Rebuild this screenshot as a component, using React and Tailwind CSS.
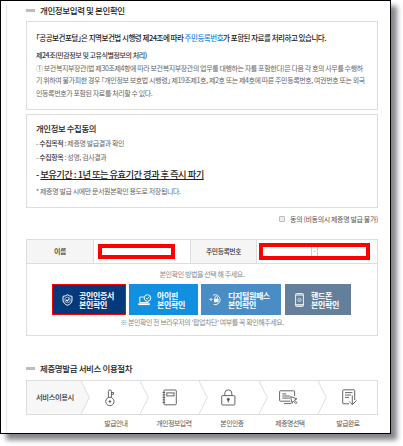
import React from "react";

function Heading({ children }) {
  return (
    <div className="flex h-[12px] items-center gap-[5px]">
      <span className="h-[3px] w-[9px] bg-[#bdbdbd]" />
      <h2 className="text-[8.5px] leading-[12px] font-medium text-[#222]">{children}</h2>
    </div>
  );
}

function ShieldIcon() {
  return (
    <svg className="h-[12px] w-[11px] shrink-0" viewBox="0 0 11 12" fill="none" stroke="#fff">
      <path d="M5.500 .7C4.300 1.700 2.800 2.200 1 2.300V6c0 2.600 2 4.300 4.500 5.300C8 10.300 10 8.600 10 6V2.300C8.200 2.200 6.700 1.700 5.500 .7Z" strokeWidth="1" />
      <circle cx="5.500" cy="5.900" r="2.800" strokeWidth=".6" />
      <path d="M4 5.700 5.200 7 7.300 4.600" strokeWidth="1.100" />
    </svg>
  );
}

function IpinIcon() {
  return (
    <svg className="h-[12px] w-[14px] shrink-0" viewBox="0 0 14 12" fill="none" stroke="#fff" strokeWidth=".9">
      <path d="M6 3H1.800v5.500h8.400V7.500" />
      <path d="M.3 10.200h11.500" strokeWidth="1.800" />
      <circle cx="9.500" cy="4" r="3.300" fill="#1190df" />
      <path d="m8 4 1.200 1.200L11.500 2.500" />
    </svg>
  );
}

function OnePassIcon() {
  return (
    <svg className="h-[13px] w-[13px] shrink-0" viewBox="0 0 13 13" fill="none" stroke="#fff">
      <path d="M2 8V6M4 2.200A5 5 0 1 1 4.600 11.500" strokeWidth=".9" />
      <path d="M.4 7 2 5.200 3.600 7" strokeWidth=".8" />
      <rect x="5" y="5.800" width="4.500" height="3.500" fill="#fff" stroke="none" />
      <path d="M5.900 6V4.700a1.350 1.350 0 0 1 2.700 0V6" strokeWidth=".8" />
    </svg>
  );
}

function PhoneIcon() {
  return (
    <svg className="h-[14px] w-[9px] shrink-0" viewBox="0 0 9 14" fill="none" stroke="#fff">
      <rect x=".6" y=".6" width="7.800" height="12.800" rx=".8" strokeWidth=".9" />
      <path d="M.6 2h7.800M.6 11.900h7.800" strokeWidth="1.200" />
      <circle cx="4.500" cy="6.900" r="1.700" strokeWidth=".6" />
      <path d="m3.700 6.900.7.700 1.100-1.300" strokeWidth=".6" />
    </svg>
  );
}

function ThermoIcon() {
  return (
    <svg className="h-[18px] w-[12px]" viewBox="0 0 12 18" fill="none" stroke="#555" strokeWidth=".9">
      <path d="M4.400 8.500V2.400a1.500 1.500 0 0 1 3 0v6.100" />
      <circle cx="5.900" cy="12.500" r="4.200" />
      <circle cx="5.900" cy="12.500" r=".8" fill="#555" />
      <path d="M7.400 3.500H9.500v1.800H7.400" />
    </svg>
  );
}

function NoteIcon() {
  return (
    <svg className="h-[17px] w-[15px]" viewBox="0 0 15 17" fill="none" stroke="#555" strokeWidth=".9">
      <rect x="2" y="1" width="12.300" height="14.800" rx=".9" />
      <path d="M.5 3.400h2.600M.5 5.900h2.600M.5 8.400h2.600M.5 10.900h2.600M.5 13.400h2.600" strokeWidth="1" />
      <rect x="4.800" y="3.900" width="7.200" height="3" />
    </svg>
  );
}

function LockIcon() {
  return (
    <svg className="h-[17px] w-[15px]" viewBox="0 0 15 17" fill="none" stroke="#555" strokeWidth=".9">
      <rect x=".7" y="6.600" width="13.200" height="9.400" rx="1" />
      <path d="M3.800 6.600V4.300a3.500 3.500 0 0 1 7 0v2.300" />
      <circle cx="7.300" cy="10.400" r="1.100" fill="#555" />
      <path d="M7.300 11v2.600" />
    </svg>
  );
}

function SelectIcon() {
  return (
    <svg className="h-[15px] w-[19px]" viewBox="0 0 19 15" fill="none" stroke="#555" strokeWidth=".9">
      <path d="M15.600 6V1.600a.8.800 0 0 0-.8-.8H1.400a.8.800 0 0 0-.8.800v8.800a.8.800 0 0 0 .8.800h10" />
      <path d="M3.300 3.900h4M3.300 6h7.500M3.300 8.100h7.500M5 13.600h7" />
      <path d="m11.600 6.600 6.300 2.200-2.500 1.200 2.500 2.600-1.100 1-2.500-2.500-1.200 2.200Z" fill="#fff" />
    </svg>
  );
}

function DoneIcon() {
  return (
    <svg className="h-[17px] w-[15px]" viewBox="0 0 15 17" fill="none" stroke="#555" strokeWidth=".9">
      <path d="M12.700 11V1.600a.8.800 0 0 0-.8-.8H1.500a.8.800 0 0 0-.8.800v12.400a.8.800 0 0 0 .8.800h5.500" />
      <path d="M3 3.600h7.500M3 6h6M3 8.400h4" />
      <path d="M10.300 6.500v9M7.200 12.500l3.100 3.200 4.200-4.200" />
    </svg>
  );
}

function Chevron({ fill }) {
  return (
    <svg className="h-[33px] w-[9px] shrink-0" viewBox="0 0 9 33" stroke="#ddd" strokeWidth="1">
      <path d="M0 0 8.300 16.500 0 33" fill={fill} />
    </svg>
  );
}

const methods = [
  { box: "w-[74px] border border-[#f00] bg-[#043a7c] pl-[9px] gap-[6px]", icon: <ShieldIcon />, name: "공인인증서" },
  { box: "ml-[3px] w-[69px] bg-[#1190df] pl-[9px] gap-[5px]", icon: <IpinIcon />, name: "아이핀" },
  { box: "ml-[3px] w-[80px] bg-[#4a8cc4] pl-[8px] gap-[6px]", icon: <OnePassIcon />, name: "디지털원패스" },
  { box: "ml-[4px] w-[66px] bg-[#637f9b] pl-[10px] gap-[7px]", icon: <PhoneIcon />, name: "핸드폰" },
];

const steps = [
  { icon: <ThermoIcon />, label: "발급안내", pad: "pr-[10px]" },
  { icon: <NoteIcon />, label: "개인정보입력", pad: "pr-[10px]" },
  { icon: <LockIcon />, label: "본인인증", pad: "pr-[10px]" },
  { icon: <SelectIcon />, label: "제증명선택", pad: "pr-[8px]" },
  { icon: <DoneIcon />, label: "발급완료", pad: "pr-[4px]" },
];

export default function App() {
  return (
    <div className="h-[446px] w-[403px] overflow-hidden bg-white font-['Noto_Sans_CJK_KR',sans-serif] tracking-[-0.39px] text-[#666]">
      <div className="h-[434px] w-[391px] border border-black bg-white pt-[3px] pl-[5px] shadow-[6px_6px_5px_#85858c]">
        <div className="h-[427px] w-[373px] border-l border-[#e8e8e8] pl-[19px] whitespace-nowrap">
          <Heading>개인정보입력 및 본인확인</Heading>

          <section className="mt-[5px] h-[89px] w-[352px] border border-[#ddd] pt-[9px] pl-[9px] text-[7px] leading-[12.5px] [font-feature-settings:'halt']">
            <p className="h-[14px] text-[7.5px] leading-[14px] font-medium tracking-[-0.48px] text-[#222]">
              「공공보건포털」은 지역보건법 시행령 제24조에 따라 <span className="text-[#1188dd]">주민등록번호</span>가 포함된 자료를 처리하고 있습니다.
            </p>
            <p className="mt-[4px] font-medium tracking-[-0.43px] text-[#333]">제24조(민감정보 및 고유식별정보의 처리)</p>
            <p>
              ① 보건복지부장관(법 제30조제4항에 따라 보건복지부장관의 업무를 대행하는 자를 포함한다)은 다음 각 호의 사무를 수행하
              <br />
              기 위하여 불가피한 경우 「개인정보 보호법 시행령」 제19조제1호, 제2호 또는 제4호에 따른 주민등록번호, 여권번호 또는 외국
              <br />
              인등록번호가 포함된 자료를 처리할 수 있다.
            </p>
          </section>

          <section className="mt-[4px] h-[94px] w-[352px] border border-[#ddd] pt-[6px] pl-[9px] text-[7px] leading-[14px]">
            <h3 className="text-[8.4px] font-medium text-[#222]">개인정보 수집동의</h3>
            <p className="mt-[1px]">- <span className="font-medium text-[#333]">수집목적</span> : 제증명 발급결과 확인</p>
            <p>- <span className="font-medium text-[#333]">수집항목</span> : 성명, 검사결과</p>
            <p className="mt-[1px] h-[18px] text-[9.3px] leading-[18px] font-medium tracking-[-0.55px] text-[#222]">
              - <span className="underline decoration-1 underline-offset-1">보유기간 : 1년 또는 유효기간 경과 후 즉시 파기</span>
            </p>
            <p className="mt-[1px]">* 제증명 발급 시에만 문서원본확인 용도로 저장됩니다.</p>
          </section>

          <div className="mt-[4px] flex h-[14px] w-[352px] items-center justify-end gap-[5px] text-[7px] tracking-[-0.36px] text-[#555]">
            <span className="h-[6px] w-[6px] rounded-[1px] border border-[#bbb] bg-[#eee]" />
            동의 (비동의시 제증명 발급 불가)
          </div>

          <section className="mt-[13px] h-[97px] w-[352px] border border-[#ddd] text-center text-[7px]">
            <div className="flex h-[24px] border-b border-[#ddd] font-medium text-[#333]">
              <div className="flex w-[67px] items-center justify-center border-r border-[#ddd] bg-[#f5f5f5]">이름</div>
              <div className="flex w-[96px] items-center pl-[4px]">
                <div className="h-[15px] w-[77px] border-4 border-[#f00] bg-white" />
              </div>
              <div className="flex w-[67px] items-center justify-center border-x border-[#ddd] bg-[#f5f5f5] text-[6.8px]">주민등록번호</div>
              <div className="flex items-center pl-[2px]">
                <div className="flex h-[17px] w-[111px] items-center border-4 border-[#f00] bg-white pl-[48px]">
                  <span className="h-[9px] w-[7px] border-x border-[#ccc] text-[6px] leading-[8px] text-[#888]">-</span>
                </div>
              </div>
            </div>
            <p className="mt-[4px] h-[12px] leading-[12px] text-[#888]">본인확인 방법을 선택 해 주세요.</p>
            <div className="mt-[4px] flex h-[31px] pl-[25px]">
              {methods.map((m) => (
                <button key={m.name} className={"flex items-center text-left text-[8px] leading-[9px] font-bold text-white " + m.box}>
                  {m.icon}
                  <span>
                    {m.name}
                    <br />
                    본인확인
                  </span>
                </button>
              ))}
            </div>
            <p className="mt-[1px] h-[12px] leading-[12px] tracking-[-0.42px] text-[#888]">※ 본인확인 전 브라우저의 '팝업차단' 여부를 꼭 확인해주세요.</p>
          </section>

          <div className="mt-[26px]">
            <Heading>제증명발급 서비스 이용절차</Heading>
          </div>

          <div className="mt-[6px] flex h-[35px] w-[352px] border border-[#ddd]">
            <div className="flex w-[54px] shrink-0 items-center bg-[#f7f7f7] pl-[9px] text-[7.3px] font-medium text-[#333]">서비스이용시</div>
            {steps.map((s, i) => (
              <div key={s.label} className="flex w-[59.2px]">
                <Chevron fill={i === 0 ? "#f7f7f7" : "#fff"} />
                <div className={"flex flex-1 items-center justify-center " + s.pad}>{s.icon}</div>
              </div>
            ))}
          </div>
          <div className="mt-[2px] flex w-[352px] pl-[61px] text-center text-[6.8px] leading-[12px] text-[#555]">
            {steps.map((s) => (
              <span key={s.label} className="w-[58px]">{s.label}</span>
            ))}
          </div>
        </div>
      </div>
    </div>
  );
}
